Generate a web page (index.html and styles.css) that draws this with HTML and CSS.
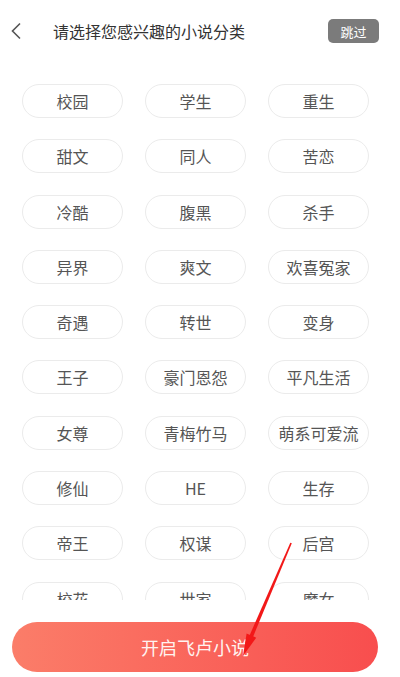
FILE: index.html
```html
<!DOCTYPE html>
<html lang="zh-CN">
<head>
    <meta charset="UTF-8">
    <meta name="viewport" content="width=device-width, initial-scale=1.0">
    <title>选择兴趣分类</title>
    <link rel="stylesheet" href="styles.css">
</head>
<body>
    <div class="page">
        <div class="header">
            <span class="back">
                <svg width="12" height="18" viewBox="0 0 12 18">
                    <polyline points="10,1.5 2.5,9 10,16.5" fill="none" stroke="#555" stroke-width="1.6"/>
                </svg>
            </span>
            <h1 class="title">请选择您感兴趣的小说分类</h1>
            <button class="skip">跳过</button>
        </div>

        <div class="tags">
            <span class="tag">校园</span>
            <span class="tag">学生</span>
            <span class="tag">重生</span>
            <span class="tag">甜文</span>
            <span class="tag">同人</span>
            <span class="tag">苦恋</span>
            <span class="tag">冷酷</span>
            <span class="tag">腹黑</span>
            <span class="tag">杀手</span>
            <span class="tag">异界</span>
            <span class="tag">爽文</span>
            <span class="tag">欢喜冤家</span>
            <span class="tag">奇遇</span>
            <span class="tag">转世</span>
            <span class="tag">变身</span>
            <span class="tag">王子</span>
            <span class="tag">豪门恩怨</span>
            <span class="tag">平凡生活</span>
            <span class="tag">女尊</span>
            <span class="tag">青梅竹马</span>
            <span class="tag">萌系可爱流</span>
            <span class="tag">修仙</span>
            <span class="tag">HE</span>
            <span class="tag">生存</span>
            <span class="tag">帝王</span>
            <span class="tag">权谋</span>
            <span class="tag">后宫</span>
            <span class="tag">校花</span>
            <span class="tag">世家</span>
            <span class="tag">魔女</span>
        </div>

        <div class="footer">
            <button class="start">开启飞卢小说</button>
        </div>

        <!-- red pointer drawn on top of the start button -->
        <svg class="pointer" width="400" height="677" viewBox="0 0 400 677">
            <polygon points="290.3,542.7 291.8,543.3 253,637 249.5,635.5" fill="#f21818"/>
            <polygon points="243,656 246.6,633.6 256.2,637.7" fill="#f21818"/>
        </svg>
    </div>
</body>
</html>
```

FILE: styles.css
```css
body {
    margin: 0;
    padding: 0;
    background-color: #fff;
    font-family: "Noto Sans CJK SC", "Noto Sans", sans-serif;
    color: #333;
}
.page {
    position: relative;
    width: 400px;
    height: 677px;
    overflow: hidden;
}
.header {
    height: 62px;
    display: flex;
    align-items: center;
    padding: 0 21px 0 10px;
}
.back {
    display: flex;
    width: 12px;
    margin-right: 31px;
}
.title {
    flex: 1;
    margin: 0;
    font-size: 16px;
    font-weight: normal;
    color: #333;
}
.skip {
    width: 51px;
    height: 24px;
    border: none;
    border-radius: 5px;
    background-color: #7b7b7b;
    color: #fff;
    font-family: inherit;
    font-size: 13px;
    padding: 0;
}
.tags {
    height: 516px;
    padding: 22px 0 0 22px;
    display: grid;
    grid-template-columns: repeat(3, 101px);
    grid-auto-rows: 34px;
    column-gap: 22px;
    row-gap: 21.3px;
    overflow: hidden;
}
.tag {
    display: flex;
    align-items: center;
    justify-content: center;
    border: 1px solid #ebebeb;
    border-radius: 17px;
    font-size: 16px;
    color: #555;
    box-sizing: border-box;
}
.footer {
    padding: 22px 22px 0 12px;
}
.start {
    width: 366px;
    height: 50px;
    border: none;
    border-radius: 25px;
    background: linear-gradient(to right, #fb7d69, #f84e4e);
    color: #fff3f0;
    font-family: inherit;
    font-size: 18px;
    padding: 0;
}
.pointer {
    position: absolute;
    left: 0;
    top: 0;
    pointer-events: none;
}
```
